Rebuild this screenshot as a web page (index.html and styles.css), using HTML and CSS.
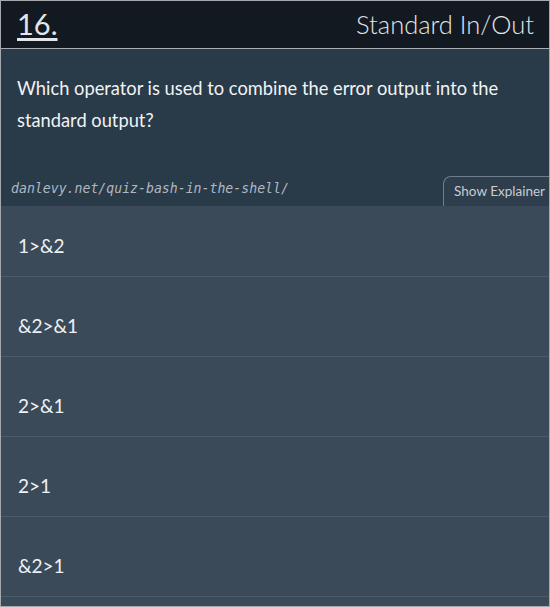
FILE: index.html
```html
<!DOCTYPE html>
<html>
<head>
<meta charset="utf-8">
<link rel="stylesheet" href="styles.css">
</head>
<body>
<div class="card">
  <header class="head">
    <a class="num">16.</a>
    <span class="topic">Standard In/Out</span>
  </header>
  <section class="question">
    <p class="qtext">Which operator is used to combine the error output into the standard output?</p>
    <div class="meta">
      <span class="url">danlevy.net/quiz-bash-in-the-shell/</span>
      <span class="tab">Show Explainer</span>
    </div>
  </section>
  <ul class="options">
    <li class="opt">1&gt;&amp;2</li>
    <li class="opt">&amp;2&gt;&amp;1</li>
    <li class="opt">2&gt;&amp;1</li>
    <li class="opt">2&gt;1</li>
    <li class="opt">&amp;2&gt;1</li>
  </ul>
</div>
</body>
</html>
```
FILE: styles.css
```css
* { box-sizing: border-box; }
html, body { margin: 0; padding: 0; background: #ffffff; }
.card {
  width: 550px;
  height: 607px;
  border: 1px solid #a6a9ac;
  background: #3a4a58;
  display: flex;
  flex-direction: column;
  overflow: hidden;
}
.head {
  height: 48px;
  flex: none;
  background: #121920;
  border-bottom: 1px solid #a7aeb5;
  display: flex;
  align-items: center;
  justify-content: space-between;
  padding: 0 15px 2px 16px;
  font-family: Lato, "Open Sans", sans-serif;
  color: #e2e6ea;
}
.num {
  font-size: 29px;
  text-decoration: underline;
  text-decoration-thickness: 3px;
  text-underline-offset: 3px;
}
.topic {
  font-size: 25.5px;
  font-weight: 300;
}
.question {
  flex: none;
  height: 157px;
  background: #293a49;
  padding-top: 23px;
  display: flex;
  flex-direction: column;
}
.qtext {
  margin: 0;
  padding: 0 30px 0 16px;
  font-family: Lato, "Open Sans", sans-serif;
  font-size: 18.3px;
  line-height: 32px;
  color: #f1f3f5;
}
.meta {
  margin-top: auto;
  display: flex;
  align-items: flex-end;
  justify-content: space-between;
}
.url {
  font-family: "DejaVu Sans Mono", monospace;
  font-style: italic;
  font-size: 13.2px;
  color: #aeb8c2;
  padding: 0 0 10px 10px;
}
.tab {
  height: 30px;
  margin-right: -7px;
  padding: 6px 10px 0 10px;
  border: 1px solid #6e7d8b;
  border-bottom: none;
  border-top-left-radius: 8px;
  background: #2e3e4c;
  font-family: Lato, "Open Sans", sans-serif;
  font-size: 13.5px;
  color: #c6cdd4;
}
.options {
  list-style: none;
  margin: 0;
  padding: 0 0 9px 0;
  flex: 1;
}
.opt {
  height: 80px;
  padding: 36px 0 0 17px;
  border-bottom: 1px solid #4a5a68;
  font-family: Lato, "Open Sans", sans-serif;
  font-size: 19px;
  line-height: 26px;
  color: #eef1f4;
}
.opt:first-child {
  height: 71px;
  padding-top: 27px;
}
```
